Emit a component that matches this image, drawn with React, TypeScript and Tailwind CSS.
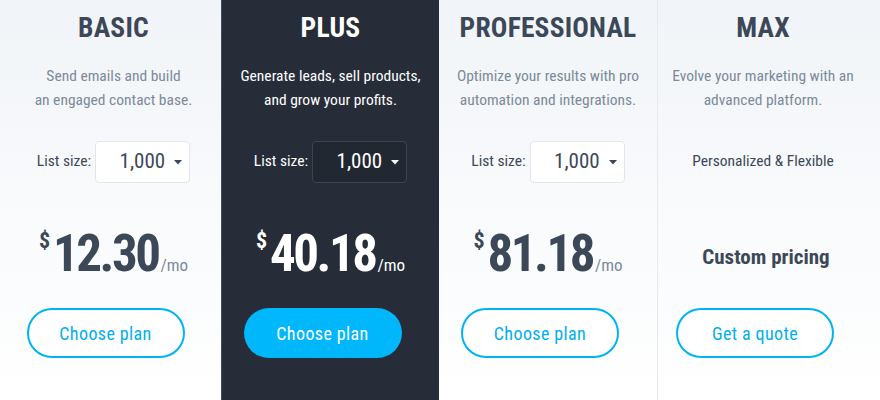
import React from "react";

type Plan = {
  name: string;
  desc: [string, string];
  dark?: boolean;
  price?: string;
  custom?: boolean;
  cta: string;
};

const plans: Plan[] = [
  { name: "BASIC", desc: ["Send emails and build", "an engaged contact base."], price: "12.30", cta: "Choose plan" },
  { name: "PLUS", desc: ["Generate leads, sell products,", "and grow your profits."], price: "40.18", cta: "Choose plan", dark: true },
  { name: "PROFESSIONAL", desc: ["Optimize your results with pro", "automation and integrations."], price: "81.18", cta: "Choose plan" },
  { name: "MAX", desc: ["Evolve your marketing with an", "advanced platform."], custom: true, cta: "Get a quote" },
];

const font = { fontFamily: '"Roboto Condensed", "DejaVu Sans Condensed", Roboto, sans-serif' };

function Caret({ dark }: { dark?: boolean }) {
  return (
    <svg width="8" height="5" viewBox="0 0 8 5" className="ml-[9px]">
      <path d="M0 0 L8 0 L4 4.5 Z" fill={dark ? "#ffffff" : "#3c4858"} />
    </svg>
  );
}

function Column({ p, idx }: { p: Plan; idx: number }) {
  const dark = !!p.dark;
  const base = dark
    ? "bg-[#262d38] border-l border-[#454c59]"
    : idx === 3
    ? "bg-gradient-to-b from-[#f1f4f8] via-[#f8fafc] to-white border-l border-[#e6e9f0]"
    : "bg-gradient-to-b from-[#f1f4f8] via-[#f8fafc] to-white";
  const shift = idx === 3 ? "pr-[12px]" : idx === 0 ? "pl-[6px]" : "";
  return (
    <div className={`flex flex-col items-center h-[400px] ${base} ${shift}`} style={font}>
      <div
        className={`mt-[10px] h-[36px] leading-[36px] text-[27.5px] font-bold tracking-[0.2px] ${dark ? "text-white" : "text-[#3c4858]"}`}
      >
        {p.name}
      </div>
      <div
        className={`mt-[18px] h-[48px] text-center text-[15.5px] leading-[24px] ${dark ? "text-white" : "text-[#7b8a9b]"}`}
      >
        <div>{p.desc[0]}</div>
        <div>{p.desc[1]}</div>
      </div>
      <div className="mt-[29px] h-[42px] flex items-center">
        {p.custom ? (
          <span className="text-[15.5px] text-[#3c4858]">Personalized &amp; Flexible</span>
        ) : (
          <>
            <span className={`text-[15.5px] ${dark ? "text-white" : "text-[#3c4858]"}`}>List size:</span>
            <div
              className={`ml-[4px] w-[95px] h-[42px] rounded-[4px] border flex items-center justify-end pr-[7px] ${
                dark ? "bg-[#222832] border-[#3d4451]" : "bg-white border-[#e2e6eb]"
              }`}
            >
              <span className={`text-[21px] ${dark ? "text-white" : "text-[#3c4858]"}`}>1,000</span>
              <Caret dark={dark} />
            </div>
          </>
        )}
      </div>
      <div className="mt-[41px] h-[60px] flex items-center justify-center">
        {p.custom ? (
          <span className="mt-[8px] text-[21px] font-bold text-[#3c4858] pl-[6px]">Custom pricing</span>
        ) : (
          <div className={`flex items-baseline ${dark ? "text-white" : "text-[#3c4858]"}`}>
            <span className="self-start mt-[7px] text-[22px] leading-[20px] font-bold mr-[3px]">$</span>
            <span className="text-[51px] leading-[60px] font-bold tracking-[-2.5px]">{p.price}</span>
            <span className={`ml-[2px] text-[17px] ${dark ? "text-white" : "text-[#7b8a9b]"}`}>/mo</span>
          </div>
        )}
      </div>
      <button
        className={`mt-[24px] h-[50px] w-[158px] rounded-full text-[18px] font-normal tracking-[0.4px] mr-[16px] ${
          dark
            ? "bg-[#00b7fb] text-white"
            : "bg-white border-2 border-[#00b3f5] text-[#00aef0]"
        }`}
      >
        {p.cta}
      </button>
    </div>
  );
}

export default function App() {
  return (
    <div className="w-[880px] h-[400px] overflow-hidden grid grid-cols-[221px_218px_218px_223px] bg-white">
      {plans.map((p, i) => (
        <Column key={p.name} p={p} idx={i} />
      ))}
    </div>
  );
}
